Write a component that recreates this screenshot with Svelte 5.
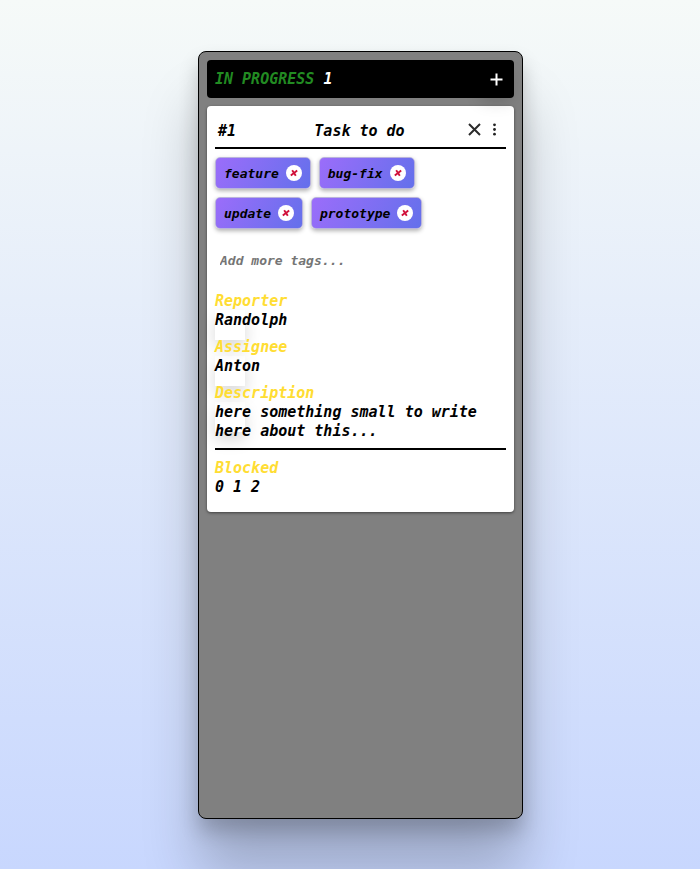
<script>
  let tags = $state(['feature', 'bug-fix', 'update', 'prototype']);
  let draft = $state('');
  const people = [
    { label: 'Reporter', value: 'Randolph' },
    { label: 'Assignee', value: 'Anton' },
    { label: 'Description', value: 'here something small to write here about this...' }
  ];

  function removeTag(tag) {
    tags = tags.filter((t) => t !== tag);
  }

  function addTag(event) {
    if (event.key === 'Enter' && draft.trim()) {
      tags = [...tags, draft.trim()];
      draft = '';
    }
  }
</script>

<main>
  <section class="column">
    <header class="column-head">
      <h2>IN PROGRESS <span>1</span></h2>
      <button class="add" aria-label="Add task">
        <svg width="13" height="13" viewBox="0 0 13 13"><path d="M6.5 0.5V12.5M0.5 6.5H12.5" stroke="#fff" stroke-width="2" /></svg>
      </button>
    </header>

    <article class="card">
      <div class="card-head">
        <span class="id">#1</span>
        <h3>Task to do</h3>
        <div class="actions">
          <button aria-label="Delete task">
            <svg width="13" height="13" viewBox="0 0 13 13"><path d="M1 1L12 12M12 1L1 12" stroke="#2b2b2b" stroke-width="2" /></svg>
          </button>
          <button aria-label="More options">
            <svg width="13" height="13" viewBox="0 0 13 13" fill="#222"><circle cx="6.5" cy="1.8" r="1.4" /><circle cx="6.5" cy="6.5" r="1.4" /><circle cx="6.5" cy="11.2" r="1.4" /></svg>
          </button>
        </div>
      </div>

      <ul class="tags">
        {#each tags as tag (tag)}
          <li>
            {tag}
            <button aria-label={`Remove ${tag}`} onclick={() => removeTag(tag)}>
              <svg width="8" height="8" viewBox="0 0 8 8"><path d="M2.2 1.3L5.8 6.7M7.2 1.5L0.8 6.5" stroke="#d0103a" stroke-width="1.9" /></svg>
            </button>
          </li>
        {/each}
      </ul>
      <input type="text" aria-label="Add more tags" placeholder="Add more tags..." bind:value={draft} onkeydown={addTag} />

      <dl>
        {#each people as row}
          <div class="row">
            <dt>{row.label}</dt>
            <dd>{row.value}<span class="shade"></span></dd>
          </div>
        {/each}
      </dl>
      <dl class="blocked">
        <div class="row">
          <dt>Blocked</dt>
          <dd>0 1 2</dd>
        </div>
      </dl>
    </article>
  </section>
</main>

<style>
  :global(body) {
    margin: 0;
  }

  main {
    box-sizing: border-box;
    min-height: 100vh;
    display: flex;
    justify-content: center;
    padding: 51px 16px 50px 37px;
    background: linear-gradient(#f6faf8, #c8d7fe);
    color: #000;
    font: italic bold 15px/19px 'DejaVu Sans Mono', 'Liberation Mono', monospace;
  }

  .column {
    box-sizing: border-box;
    width: 100%;
    max-width: 325px;
    padding: 8px;
    border: 1px solid #000;
    border-radius: 8px;
    background: #808080;
    box-shadow: 0 54px 55px rgba(0, 0, 0, 0.22), 0 12px 20px rgba(0, 0, 0, 0.2);
  }

  .column-head {
    display: flex;
    align-items: center;
    justify-content: space-between;
    height: 38px;
    padding: 0 3px 0 8px;
    border-radius: 4px;
    background: #000;
  }

  h2,
  h3 {
    margin: 0;
    font: inherit;
  }

  h2 {
    color: #228b22;
  }

  h2 span {
    color: #fff;
  }

  button {
    display: flex;
    align-items: center;
    justify-content: center;
    padding: 0;
    border: 0;
    background: none;
    cursor: pointer;
  }

  .add {
    width: 30px;
    height: 30px;
    box-shadow: 0 8px 16px rgba(0, 0, 0, 0.15);
  }

  .card {
    margin-top: 8px;
    padding: 8px 8px 7px;
    border-radius: 4px;
    background: #fff;
    box-shadow: 0 1px 3px rgba(0, 0, 0, 0.5);
  }

  .card-head {
    display: grid;
    grid-template-columns: 1fr auto 1fr;
    align-items: end;
    height: 26px;
    padding: 7px 5px 0 3px;
    border-bottom: 2px solid #000;
  }

  .id,
  h3 {
    padding-bottom: 6px;
  }

  .actions {
    display: flex;
    justify-content: flex-end;
    gap: 7px;
    padding-bottom: 11px;
  }

  .tags {
    display: flex;
    flex-wrap: wrap;
    gap: 8px;
    margin: 8px 0 0;
    padding: 0;
    list-style: none;
  }

  .tags li {
    box-sizing: border-box;
    display: flex;
    align-items: center;
    gap: 7px;
    height: 32px;
    padding: 0 8px;
    border: 1px solid #b9b3dc;
    border-radius: 5px;
    background: linear-gradient(120deg, #9b6dfa, #6470eb);
    box-shadow: 0 2px 4px rgba(0, 0, 0, 0.3);
    font-size: 13px;
  }

  .tags button {
    width: 16px;
    height: 16px;
    border-radius: 50%;
    background: #fff;
  }

  input {
    box-sizing: border-box;
    display: block;
    width: 100%;
    height: 40px;
    margin-top: 11px;
    padding: 0 5px;
    border: 0;
    outline: 0;
    background: none;
    font: inherit;
    font-size: 13px;
  }

  input::placeholder {
    color: #757575;
    opacity: 1;
  }

  dl {
    margin: 12px 0 0;
  }

  .row {
    position: relative;
    padding-bottom: 8px;
  }

  dt {
    color: #fd3;
  }

  dd {
    margin: 0;
  }

  .shade {
    position: absolute;
    left: 0;
    top: 18px;
    width: 30px;
    height: 30px;
    box-shadow: 0 8px 16px rgba(0, 0, 0, 0.15);
  }

  .blocked {
    margin-top: -1px;
    padding-top: 9px;
    border-top: 2px solid #000;
  }
</style>
